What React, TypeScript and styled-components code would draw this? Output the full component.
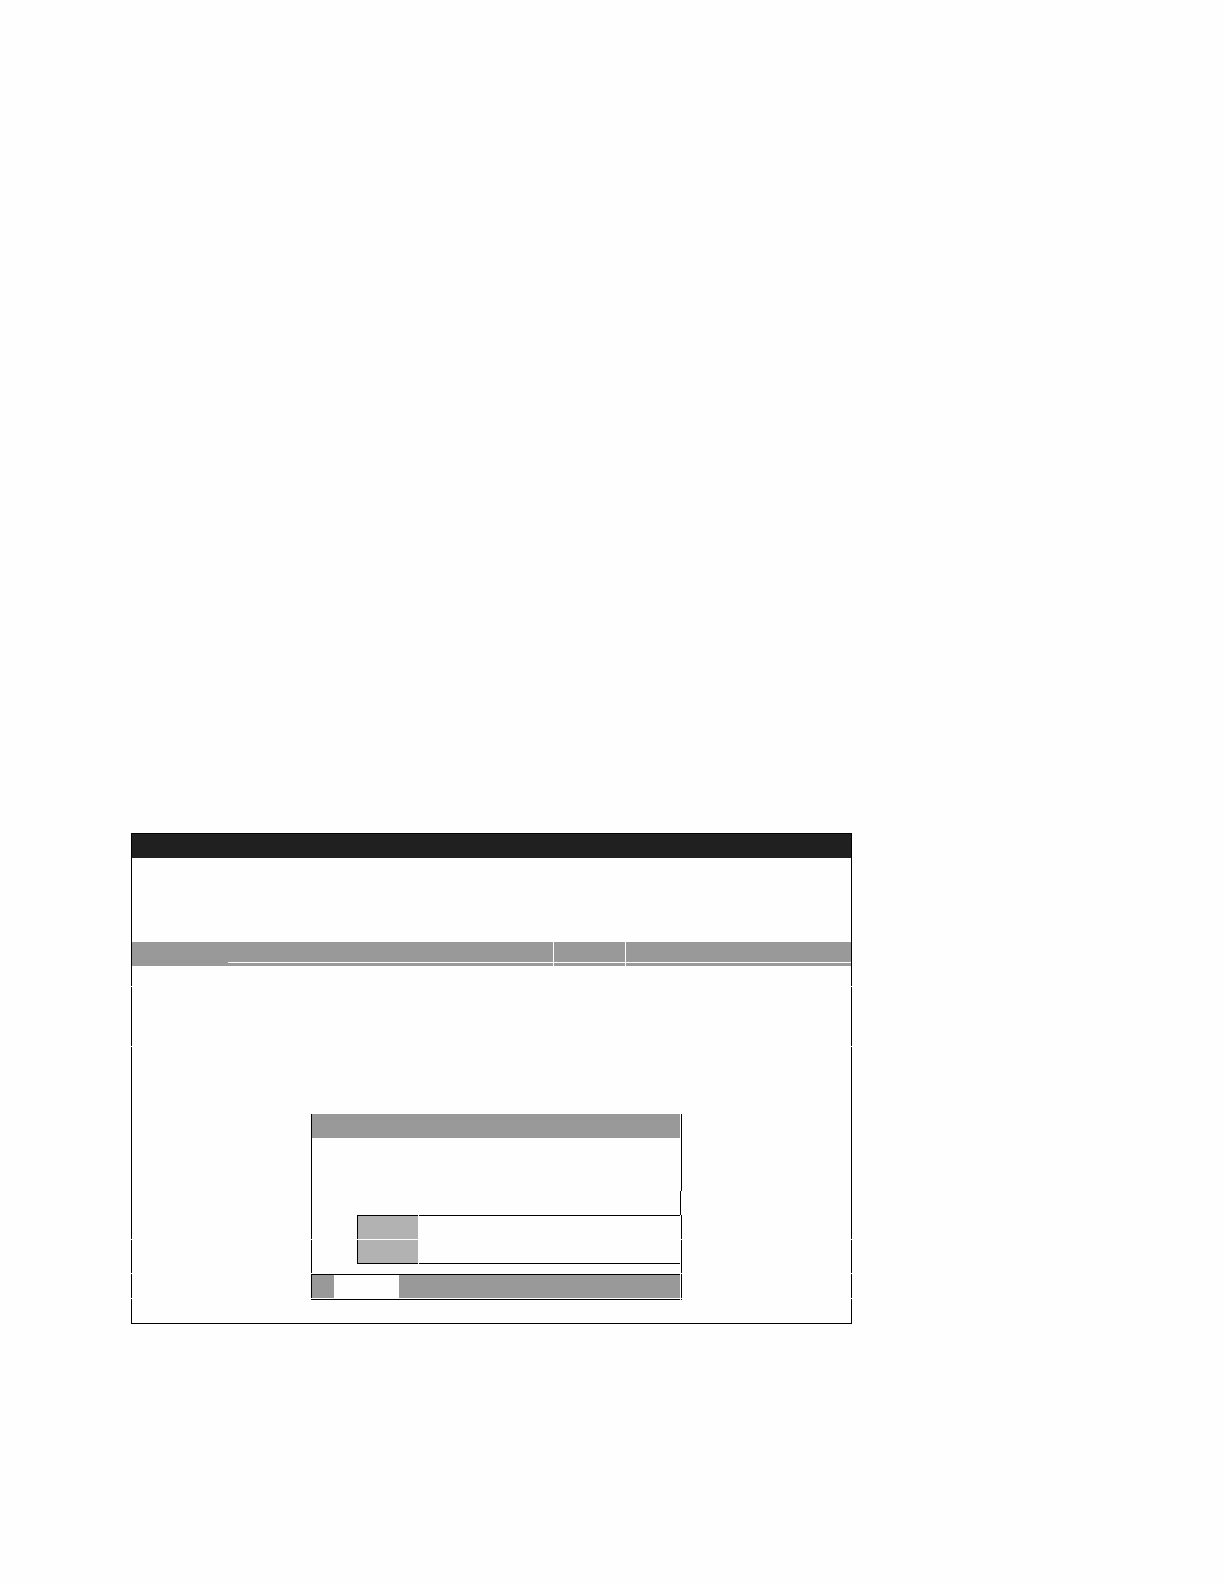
import React from "react";
import styled, { createGlobalStyle } from "styled-components";

const ink = "#000000";
const paper = "#fefefe";
const grey = "#999999";
const lightGrey = "#b2b2b2";

const GlobalStyle = createGlobalStyle`
  *, *::before, *::after { box-sizing: border-box; }
  body {
    margin: 0;
    background: ${paper};
    font-family: "Liberation Sans", Arial, sans-serif;
    font-size: 14px;
  }
`;

const Page = styled.main`
  padding: 833px 131px 260px;
`;

/* The frame is a stack of bordered sections, parted by hairline breaks. */
const Frame = styled.div`
  display: flex;
  flex-direction: column;
  gap: 1px;
  max-width: 721px;
`;

const Section = styled.section<{ $first?: boolean; $last?: boolean }>`
  border: 0 solid ${ink};
  border-left-width: 1px;
  border-right-width: 1px;
  border-top-width: ${(p) => (p.$first ? "1px" : "0")};
  border-bottom-width: ${(p) => (p.$last ? "1px" : "0")};
`;

const Space = styled.div<{ $size: number }>`
  height: ${(p) => p.$size}px;
`;

const TitleBar = styled.header`
  height: 24px;
  background: #202020;
`;

const HeaderRow = styled.div`
  display: grid;
  grid-template-columns: 96px 325px 72px 1fr;
  height: 24px;
`;

const HeaderCell = styled.div<{ $divided?: boolean }>`
  background: ${grey};
  border-left: ${(p) => (p.$divided ? `1px solid ${paper}` : "0")};
`;

const HeaderRule = styled.div`
  height: 21px;
  border-bottom: 1px solid ${paper};
`;

const DialogPart = styled.div<{ $inset?: boolean }>`
  width: ${(p) => (p.$inset ? "370px" : "371px")};
  margin-left: 179px;
  padding-right: ${(p) => (p.$inset ? "0" : "1px")};
  border-left: 1px solid ${ink};
  border-right: 1px solid ${ink};
`;

const DialogTitle = styled.div`
  height: 24px;
  background: ${grey};
`;

const FieldRow = styled.div`
  display: grid;
  grid-template-columns: 60px 1fr;
  gap: 1px;
  height: 24px;
  margin-left: 45px;
  border-left: 1px solid ${ink};
`;

const FieldLabel = styled.label<{ $edge: "top" | "bottom" }>`
  background: ${lightGrey};
  border-${(p) => p.$edge}: 1px solid ${ink};
`;

const FieldInput = styled.input<{ $edge: "top" | "bottom" }>`
  width: 100%;
  min-width: 0;
  height: 24px;
  margin: 0;
  padding: 0 4px;
  border: 0;
  border-${(p) => p.$edge}: 1px solid ${ink};
  border-radius: 0;
  background: transparent;
  font: inherit;
`;

const DialogFooter = styled.div`
  display: flex;
  height: 24px;
  padding-left: 22px;
  border-top: 1px solid ${ink};
  background: ${grey};
`;

const FooterButton = styled.button`
  width: 65px;
  padding: 0;
  border: 0;
  background: ${paper};
  font: inherit;
`;

const DialogBase = styled.div`
  height: 1px;
  background: ${ink};
`;

export default function App() {
  return (
    <>
      <GlobalStyle />
      <Page>
        <Frame>
          <Section $first>
            <TitleBar />
            <Space $size={84} />
            <HeaderRow>
              <HeaderCell />
              <HeaderCell>
                <HeaderRule />
              </HeaderCell>
              <HeaderCell $divided>
                <HeaderRule />
              </HeaderCell>
              <HeaderCell $divided>
                <HeaderRule />
              </HeaderCell>
            </HeaderRow>
            <Space $size={20} />
          </Section>
          <Section>
            <Space $size={59} />
          </Section>
          <Section>
            <Space $size={67} />
            <DialogPart>
              <DialogTitle />
              <Space $size={53} />
            </DialogPart>
            <DialogPart $inset>
              <Space $size={24} />
            </DialogPart>
            <DialogPart>
              <FieldRow>
                <FieldLabel htmlFor="first-field" $edge="top" />
                <FieldInput id="first-field" aria-label="First field" $edge="top" />
              </FieldRow>
            </DialogPart>
          </Section>
          <Section>
            <DialogPart>
              <FieldRow>
                <FieldLabel htmlFor="second-field" $edge="bottom" />
                <FieldInput id="second-field" aria-label="Second field" $edge="bottom" />
              </FieldRow>
              <Space $size={9} />
            </DialogPart>
          </Section>
          <Section>
            <DialogPart>
              <DialogFooter>
                <FooterButton type="button" aria-label="Confirm" />
              </DialogFooter>
            </DialogPart>
          </Section>
          <Section $last>
            <DialogPart>
              <DialogBase />
            </DialogPart>
            <Space $size={23} />
          </Section>
        </Frame>
      </Page>
    </>
  );
}
